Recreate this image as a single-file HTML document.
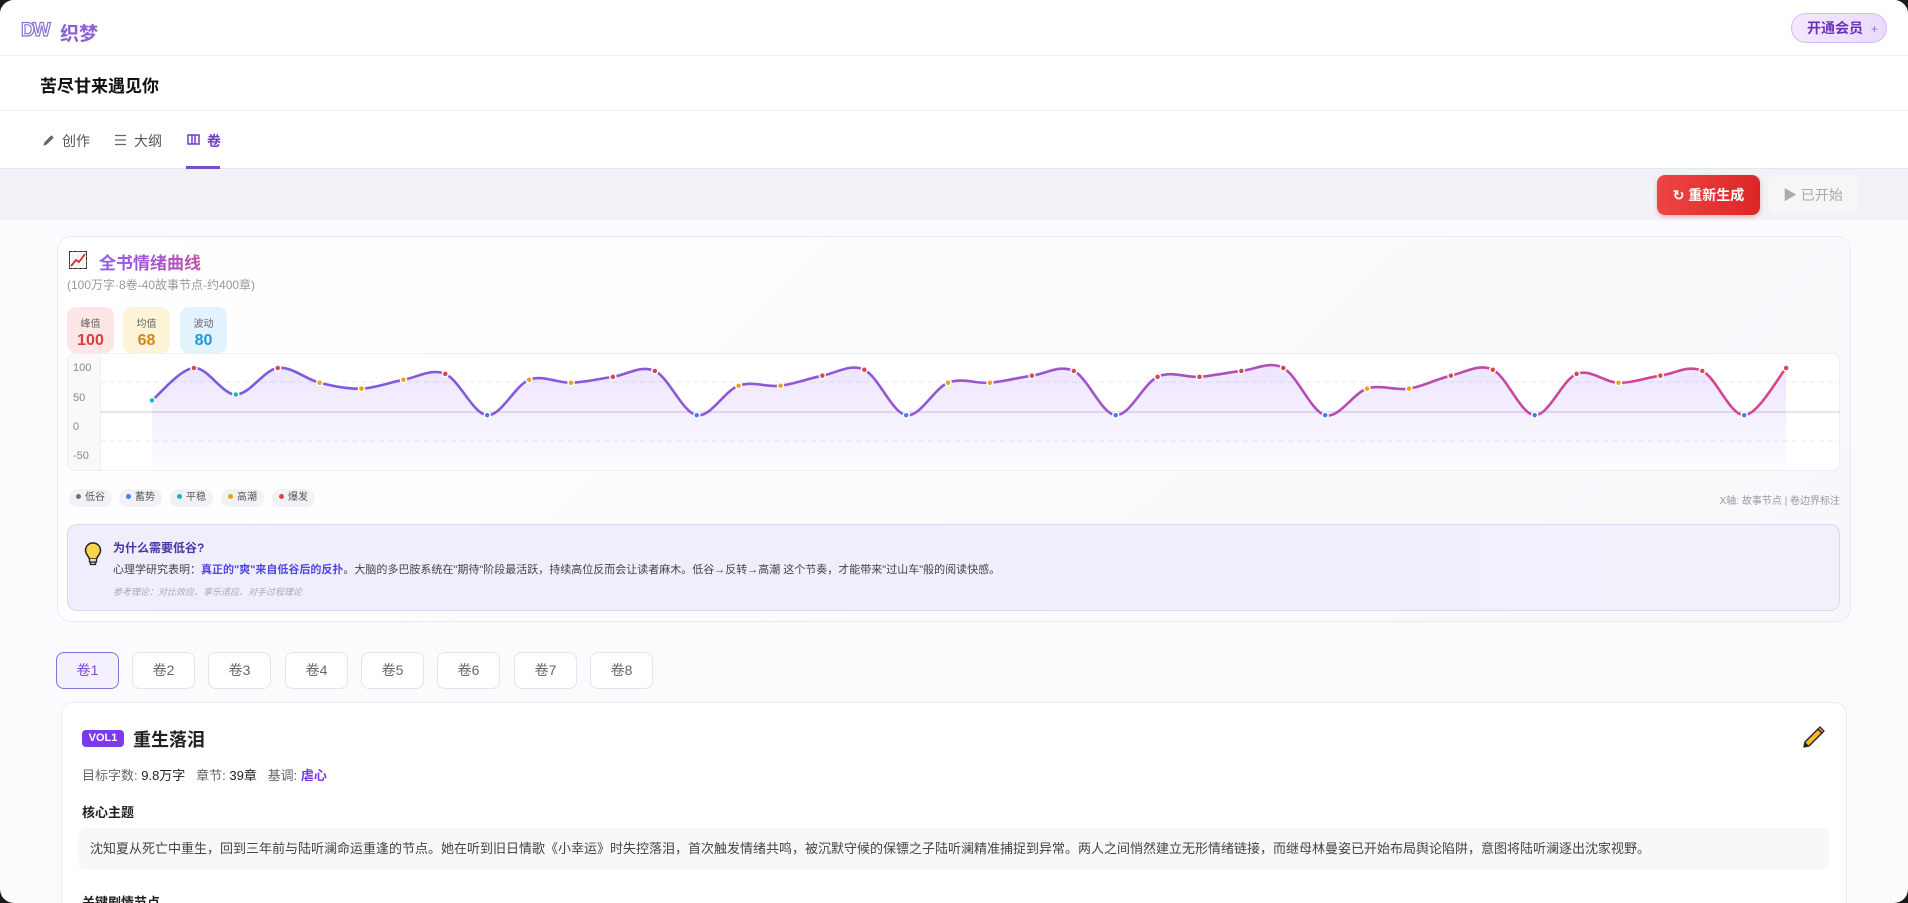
<!DOCTYPE html>
<html><head><meta charset="utf-8">
<style>
*{box-sizing:border-box;margin:0;padding:0}
html,body{width:1908px;height:903px;overflow:hidden;background:#1b1b1b}
body{font-family:"Liberation Sans","Noto Sans CJK SC",sans-serif;color:#333}
#app{position:absolute;left:0;top:0;width:1908px;height:903px;background:#fbfbfd;border-radius:14px;overflow:hidden}
.abs{position:absolute}
.hdr{left:0;top:0;width:1908px;height:56px;background:#fff;border-bottom:1px solid #eceef2}
.trow{left:0;top:56px;width:1908px;height:55px;background:#fff;border-bottom:1px solid #eceef2}
.tabs{left:0;top:111px;width:1908px;height:58px;background:#fff;border-bottom:1px solid #e4e6ec}
.gbar{left:0;top:169px;width:1908px;height:51px;background:#f0f2f7}
.card{left:57px;top:236px;width:1794px;height:386px;background:linear-gradient(135deg,#fff,#f8f8fc);border:1px solid #ebe9f3;border-radius:14px}
.stat{width:47px;height:46px;border-radius:9px;text-align:center}
.stat .l{font-size:10px;color:#666;margin-top:8px}
.stat .v{font-size:16px;font-weight:bold;margin-top:2px}
.chip{height:18px;border-radius:9px;background:#f1f2f5;font-size:10px;color:#555;line-height:18px;padding:0 7px}
.chip i{display:inline-block;width:5px;height:5px;border-radius:50%;margin-right:4px;vertical-align:1px}
.vt{top:652px;width:63px;height:37px;border:1px solid #e3e5ea;border-radius:8px;background:#fff;font-size:14px;color:#666;text-align:center;line-height:35px}
</style></head><body>
<div id="app">
<div class="abs hdr">
  <div class="abs" style="left:21px;top:20px;font-size:19px;font-weight:bold;color:transparent;-webkit-text-stroke:1.2px #8b6fd6;letter-spacing:-2px">DW</div>
  <div class="abs" style="left:60px;top:19px;font-size:19px;font-weight:bold;color:#8a5fd8">织梦</div>
  <div class="abs" style="left:1791px;top:13px;width:96px;height:30px;border-radius:15px;background:linear-gradient(90deg,#f3e8fd,#e9dcfb);border:1px solid #d5bdf3;font-size:14px;font-weight:bold;color:#6b2fbd;line-height:28px;padding-left:15px">开通会员 <span style="font-weight:normal;font-size:12px;color:#9b6fd8;margin-left:4px">+</span></div>
</div>
<div class="abs trow"><div class="abs" style="left:40px;top:16px;font-size:17px;font-weight:bold;color:#111">苦尽甘来遇见你</div></div>
<div class="abs tabs">
  <svg class="abs" style="left:41px;top:22px" width="15" height="15" viewBox="0 0 13 13"><path d="M2 11 L3 8 L9 2 L11 4 L5 10 Z" fill="#666"/></svg>
  <div class="abs" style="left:62px;top:20px;font-size:14px;color:#555">创作</div>
  <svg class="abs" style="left:114px;top:23px" width="13" height="12" viewBox="0 0 13 12"><path d="M1 1.5H12M1 6H12M1 10.5H12" stroke="#666" stroke-width="1.3"/></svg>
  <div class="abs" style="left:134px;top:20px;font-size:14px;color:#555">大纲</div>
  <svg class="abs" style="left:187px;top:22px" width="13" height="13" viewBox="0 0 13 13"><rect x="1" y="2" width="11" height="9" fill="none" stroke="#6d3fc0" stroke-width="1.5"/><path d="M5 2V11M8 2V11" stroke="#6d3fc0" stroke-width="1.5"/></svg>
  <div class="abs" style="left:207px;top:20px;font-size:14px;color:#6d3fc0;font-weight:bold">卷</div>
  <div class="abs" style="left:186px;top:55px;width:34px;height:3px;background:#7b4bc9"></div>
</div>
<div class="abs gbar">
  <div class="abs" style="left:1657px;top:6px;width:103px;height:40px;border-radius:8px;background:linear-gradient(90deg,#ef4444,#dc2626);color:#fff;font-size:14px;font-weight:bold;line-height:40px;text-align:center;box-shadow:0 2px 4px rgba(220,38,38,.3)">↻ 重新生成</div>
  <div class="abs" style="left:1768px;top:6px;width:90px;height:40px;border-radius:8px;background:#f6f6f7;color:#aaa;font-size:14px;line-height:40px;text-align:center">▶ 已开始</div>
</div>

<div class="abs card"></div>
<svg class="abs" style="left:69px;top:251px" width="18" height="18" viewBox="0 0 18 18"><rect x="0.5" y="0.5" width="17" height="17" fill="#fff" stroke="#333"/><path d="M4 0V18M9 0V18M14 0V18M0 5H18M0 10H18M0 14H18" stroke="#ddd" stroke-width=".6"/><path d="M2 15 L7 9 L10 11 L16 3" fill="none" stroke="#d32f2f" stroke-width="1.8"/></svg>
<div class="abs" style="left:99px;top:249px;font-size:17px;font-weight:bold;background:linear-gradient(90deg,#8b5cf6,#c04fa8);-webkit-background-clip:text;color:transparent">全书情绪曲线</div>
<div class="abs" style="left:67px;top:276px;font-size:12px;color:#999">(100万字·8卷-40故事节点-约400章)</div>
<div class="abs stat" style="left:67px;top:307px;background:#fde6e6"><div class="l">峰值</div><div class="v" style="color:#dc3c3c">100</div></div>
<div class="abs stat" style="left:123px;top:307px;background:#fdf3d6"><div class="l">均值</div><div class="v" style="color:#d8861a">68</div></div>
<div class="abs stat" style="left:180px;top:307px;background:#e2f3fd"><div class="l">波动</div><div class="v" style="color:#1d9bd6">80</div></div>

<div class="abs" style="left:67px;top:353px;width:1773px;height:118px;background:#fff;border:1px solid #eeeef3;border-radius:8px;overflow:hidden">
  <div class="abs" style="left:0;top:0;width:33px;height:118px;background:#f9f9fb;border-right:1px solid #f0f0f4"></div>
  <div class="abs" style="left:5px;top:8px;font-size:11px;color:#888">100</div>
  <div class="abs" style="left:5px;top:38px;font-size:11px;color:#888">50</div>
  <div class="abs" style="left:5px;top:67px;font-size:11px;color:#888">0</div>
  <div class="abs" style="left:5px;top:96px;font-size:11px;color:#888">-50</div>
</div>
<svg id="ch" class="abs" style="left:67px;top:353px" width="1773" height="118"></svg>

<div class="abs chip" style="left:69px;top:489px"><i style="background:#6b7280"></i>低谷</div>
<div class="abs chip" style="left:119px;top:489px"><i style="background:#3b82f6"></i>蓄势</div>
<div class="abs chip" style="left:170px;top:489px"><i style="background:#14b8c6"></i>平稳</div>
<div class="abs chip" style="left:221px;top:489px"><i style="background:#f59e0b"></i>高潮</div>
<div class="abs chip" style="left:272px;top:489px"><i style="background:#e04444"></i>爆发</div>
<div class="abs" style="left:1600px;top:492px;width:240px;text-align:right;font-size:10px;color:#999">X轴: 故事节点 | 卷边界标注</div>

<div class="abs" style="left:67px;top:524px;width:1773px;height:87px;background:linear-gradient(90deg,#f0edfc,#f3f0fc);border:1px solid #dcd6f1;border-radius:10px">
  <svg class="abs" style="left:16px;top:17px" width="18" height="26" viewBox="0 0 18 26"><path d="M9 1C4 1 1.5 5 1.5 8.5C1.5 12 4.5 14 5.5 17H12.5C13.5 14 16.5 12 16.5 8.5C16.5 5 14 1 9 1Z" fill="#fcd34d" stroke="#222" stroke-width="1.5"/><path d="M5.5 17V20H12.5V17M6.5 20V22.5H11.5V20" fill="#ddd" stroke="#222" stroke-width="1.3"/></svg>
  <div class="abs" style="left:45px;top:14px;font-size:12px;font-weight:bold;color:#4338a8">为什么需要低谷?</div>
  <div class="abs" style="left:45px;top:36px;font-size:11px;color:#444;white-space:nowrap">心理学研究表明：<b style="color:#4f46e5">真正的"爽"来自低谷后的反扑</b>。大脑的多巴胺系统在"期待"阶段最活跃，持续高位反而会让读者麻木。低谷→反转→高潮 这个节奏，才能带来"过山车"般的阅读快感。</div>
  <div class="abs" style="left:45px;top:60px;font-size:9px;color:#aaa;font-style:italic">参考理论：对比效应、享乐适应、对手过程理论</div>
</div>

<div class="abs vt" style="left:56px;background:#f4f0fd;border-color:#8b6fd6;color:#7c4dcc">卷1</div>
<div class="abs vt" style="left:132px">卷2</div>
<div class="abs vt" style="left:208px">卷3</div>
<div class="abs vt" style="left:285px">卷4</div>
<div class="abs vt" style="left:361px">卷5</div>
<div class="abs vt" style="left:437px">卷6</div>
<div class="abs vt" style="left:514px">卷7</div>
<div class="abs vt" style="left:590px">卷8</div>

<div class="abs" style="left:61px;top:702px;width:1786px;height:201px;background:#fff;border:1px solid #ececf0;border-bottom:none;border-radius:12px 12px 0 0;overflow:hidden">
  <div class="abs" style="left:20px;top:27px;width:42px;height:17px;background:#7c3aed;border-radius:4px;color:#fff;font-size:11px;font-weight:bold;text-align:center;line-height:17px">VOL1</div>
  <div class="abs" style="left:71px;top:23px;font-size:18px;font-weight:bold;color:#222">重生落泪</div>
  <svg class="abs" style="left:1738px;top:22px" width="26" height="26" viewBox="0 0 26 26"><path d="M4 22 L5 17 L18 4 L22 8 L9 21 Z" fill="#f5b82e" stroke="#222" stroke-width="1.4" stroke-linejoin="round"/><path d="M18 4 L20 2 L24 6 L22 8 Z" fill="#e88" stroke="#222" stroke-width="1.2"/><path d="M4 22 L5 17 L9 21Z" fill="#222"/></svg>
  <div class="abs" style="left:20px;top:62px;font-size:13px;color:#666;white-space:nowrap">目标字数: <span style="color:#222">9.8万字</span>&nbsp;&nbsp;&nbsp;章节: <span style="color:#222">39章</span>&nbsp;&nbsp;&nbsp;基调: <b style="color:#7c3aed">虐心</b></div>
  <div class="abs" style="left:20px;top:99px;font-size:13px;font-weight:bold;color:#222">核心主题</div>
  <div class="abs" style="left:16px;top:125px;width:1751px;height:42px;background:#f7f8fa;border-radius:8px;font-size:13px;color:#444;line-height:42px;padding-left:12px;white-space:nowrap">沈知夏从死亡中重生，回到三年前与陆听澜命运重逢的节点。她在听到旧日情歌《小幸运》时失控落泪，首次触发情绪共鸣，被沉默守候的保镖之子陆听澜精准捕捉到异常。两人之间悄然建立无形情绪链接，而继母林曼姿已开始布局舆论陷阱，意图将陆听澜逐出沈家视野。</div>
  <div class="abs" style="left:20px;top:189px;font-size:13px;font-weight:bold;color:#222">关键剧情节点</div>
</div>
</div>
<script>
var V=[45,100,55,100,75,65,80,90,20,80,75,85,95,20,70,70,87,97,20,75,75,87,95,20,85,85,95,100,20,65,65,87,97,20,90,75,87,95,20,100];
var T="crcrooorboorrboorrboorrbrrrrboorrbrorrbr";
var C={c:"#14b8c6",r:"#d94848",o:"#f0a01b",b:"#3b82f6"};
var P=V.map(function(v,i){return [152-67+i*41.9,427-v*0.59-353]});
var d="M"+P[0][0]+","+P[0][1];
for(var i=0;i<P.length-1;i++){var p0=P[i-1]||P[i],p1=P[i],p2=P[i+1],p3=P[i+2]||p2;
d+=" C"+(p1[0]+(p2[0]-p0[0])/6)+","+(p1[1]+(p2[1]-p0[1])/6)+" "+(p2[0]-(p3[0]-p1[0])/6)+","+(p2[1]-(p3[1]-p1[1])/6)+" "+p2[0]+","+p2[1];}
var last=P[P.length-1];
var s='<defs><linearGradient id="lg" x1="0" x2="1"><stop offset="0" stop-color="#7a5ce0"/><stop offset=".55" stop-color="#9b55d0"/><stop offset="1" stop-color="#da4488"/></linearGradient><linearGradient id="fg" x1="0" y1="0" x2="0" y2="1"><stop offset="0" stop-color="#8b5cf6" stop-opacity=".16"/><stop offset="1" stop-color="#8b5cf6" stop-opacity=".02"/></linearGradient></defs>';
s+='<line x1="33" x2="1773" y1="29" y2="29" stroke="#ebebf0" stroke-dasharray="5 4"/><line x1="33" x2="1773" y1="88" y2="88" stroke="#ebebf0" stroke-dasharray="5 4"/><line x1="33" x2="1773" y1="59" y2="59" stroke="#ddd8e8" stroke-width="1.5"/>';
s+='<path d="'+d+' L'+last[0]+',114 L'+P[0][0]+',114 Z" fill="url(#fg)"/>';
s+='<path d="'+d+'" fill="none" stroke="url(#lg)" stroke-width="2.6"/>';
P.forEach(function(p,i){s+='<circle cx="'+p[0]+'" cy="'+p[1]+'" r="3" fill="'+C[T[i]]+'" stroke="#fff" stroke-width="1.5"/>'});
document.getElementById("ch").innerHTML=s;
</script>
</body></html>
